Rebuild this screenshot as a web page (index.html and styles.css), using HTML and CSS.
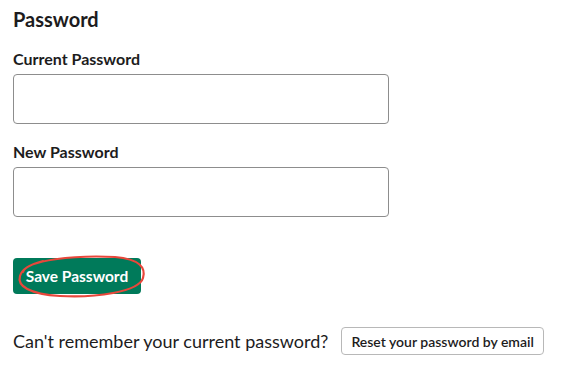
FILE: index.html
```html
<!DOCTYPE html>
<html lang="en">
<head>
<meta charset="utf-8">
<title>Password</title>
<link rel="stylesheet" href="styles.css">
</head>
<body>
<main class="page">
  <h2 class="title">Password</h2>
  <form class="form">
    <div class="field">
      <label class="label" for="cur">Current Password</label>
      <input class="input" id="cur" type="password">
    </div>
    <div class="field">
      <label class="label" for="new">New Password</label>
      <input class="input" id="new" type="password">
    </div>
    <div class="save-wrap">
      <button class="save" type="button">Save Password</button>
      <svg class="circle" width="134" height="48" viewBox="0 0 134 48" aria-hidden="true">
        <path d="M8 20 C 12 8, 60 3, 100 5 C 125 7, 131 16, 128 26 C 124 40, 80 46, 45 44 C 14 42, 2 34, 5 24 C 7 17, 16 12, 28 9" fill="none" stroke="#e8473b" stroke-width="2.2" stroke-linecap="round"/>
      </svg>
    </div>
  </form>
  <div class="forgot">
    <span class="forgot-text">Can't remember your current password?</span>
    <button class="reset" type="button">Reset your password by email</button>
  </div>
</main>
</body>
</html>
```

FILE: styles.css
```css
* { box-sizing: border-box; }
html, body { margin: 0; padding: 0; background: #ffffff; }
body {
  font-family: Lato, "Noto Sans", "Liberation Sans", sans-serif;
  color: #1d1c1d;
}
.page {
  padding: 8px 13px 0 13px;
}
.title {
  margin: 0;
  font-size: 20px;
  line-height: 22px;
  font-weight: 700;
}
.form {
  display: flex;
  flex-direction: column;
}
.field {
  display: flex;
  flex-direction: column;
  width: 376px;
}
.form .field:first-child { margin-top: 20px; }
.field + .field { margin-top: 19px; }
.label {
  font-size: 16px;
  line-height: 18px;
  font-weight: 700;
  margin-bottom: 6px;
}
.input {
  height: 50px;
  width: 376px;
  border: 1px solid #8d8d8d;
  border-radius: 4px;
  font: inherit;
  padding: 0 10px;
  background: #fff;
}
.save-wrap {
  position: relative;
  margin-top: 41px;
  align-self: flex-start;
}
.save {
  display: block;
  height: 36px;
  width: 128px;
  padding: 0;
  border: none;
  border-radius: 4px;
  background: #007a5a;
  color: #ffffff;
  font-family: Lato, "Noto Sans", sans-serif;
  font-size: 15.5px;
  font-weight: 700;
}
.circle {
  position: absolute;
  left: 2px;
  top: -6px;
  pointer-events: none;
}
.forgot {
  display: flex;
  align-items: center;
  gap: 13px;
  margin-top: 33px;
}
.forgot-text {
  font-size: 18px;
  line-height: 22px;
}
.reset {
  height: 28px;
  padding: 0 9px;
  border: 1px solid #b8b8b8;
  border-radius: 4px;
  background: #ffffff;
  color: #1d1c1d;
  font-family: Lato, "Noto Sans", sans-serif;
  font-size: 14px;
  font-weight: 600;
}
```
